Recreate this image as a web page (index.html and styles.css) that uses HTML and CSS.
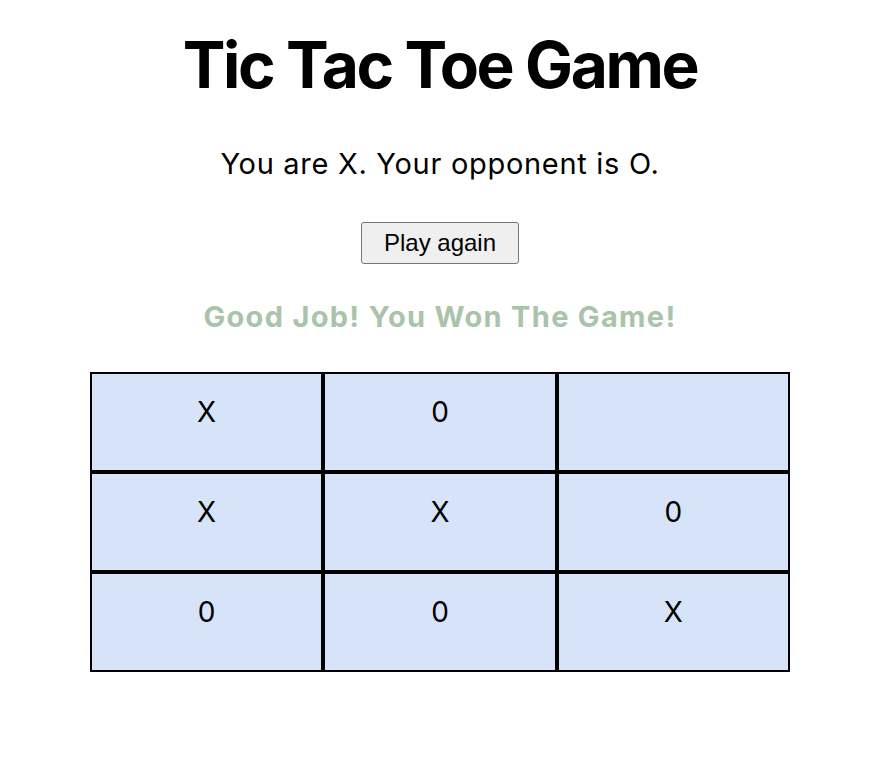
FILE: index.html
```html
<!DOCTYPE html>
<html lang="en">
<head>
<meta charset="utf-8">
<title>Tic Tac Toe Game</title>
<link rel="stylesheet" href="styles.css">
</head>
<body>
<main class="app">
  <h1 class="title">Tic Tac Toe Game</h1>
  <p class="intro">You are X. Your opponent is O.</p>
  <button class="again" type="button">Play again</button>
  <p class="result">Good Job! You Won The Game!</p>
  <div class="board">
    <div class="cell">X</div>
    <div class="cell">0</div>
    <div class="cell"></div>
    <div class="cell">X</div>
    <div class="cell">X</div>
    <div class="cell">0</div>
    <div class="cell">0</div>
    <div class="cell">0</div>
    <div class="cell">X</div>
  </div>
</main>
</body>
</html>
```

FILE: styles.css
```css
html, body {
  margin: 0;
  padding: 0;
  background: #ffffff;
}

body {
  font-family: Inter, "Noto Sans", sans-serif;
  color: #000;
}

.app {
  display: flex;
  flex-direction: column;
  align-items: center;
  padding-top: 26px;
  padding-left: 4px;
}

.title {
  margin: 0;
  font-size: 64px;
  font-weight: 700;
  line-height: 77px;
  letter-spacing: -2.4px;
}

.intro {
  margin: 44px 0 0;
  font-size: 29px;
  font-weight: 400;
  line-height: 34px;
  letter-spacing: 0.7px;
}

.again {
  margin-top: 41px;
  font-family: "Liberation Sans", Arial, sans-serif;
  font-size: 24px;
  line-height: 28px;
  padding: 6px 22px;
  background: #efefef;
  color: #000;
  border: 1px solid #767676;
  border-radius: 3px;
}

.result {
  margin: 36px 0 0;
  font-size: 29px;
  font-weight: 700;
  line-height: 34px;
  letter-spacing: 1.3px;
  color: #a9c4a9;
}

.board {
  margin-top: 38px;
  width: 700px;
  display: grid;
  grid-template-columns: repeat(3, 1fr);
}

.cell {
  height: 75px;
  padding-top: 21px;
  box-sizing: content-box;
  border: 2px solid #000;
  background: #d6e3f8;
  text-align: center;
  font-size: 28px;
  font-weight: 400;
  line-height: 34px;
}
```
